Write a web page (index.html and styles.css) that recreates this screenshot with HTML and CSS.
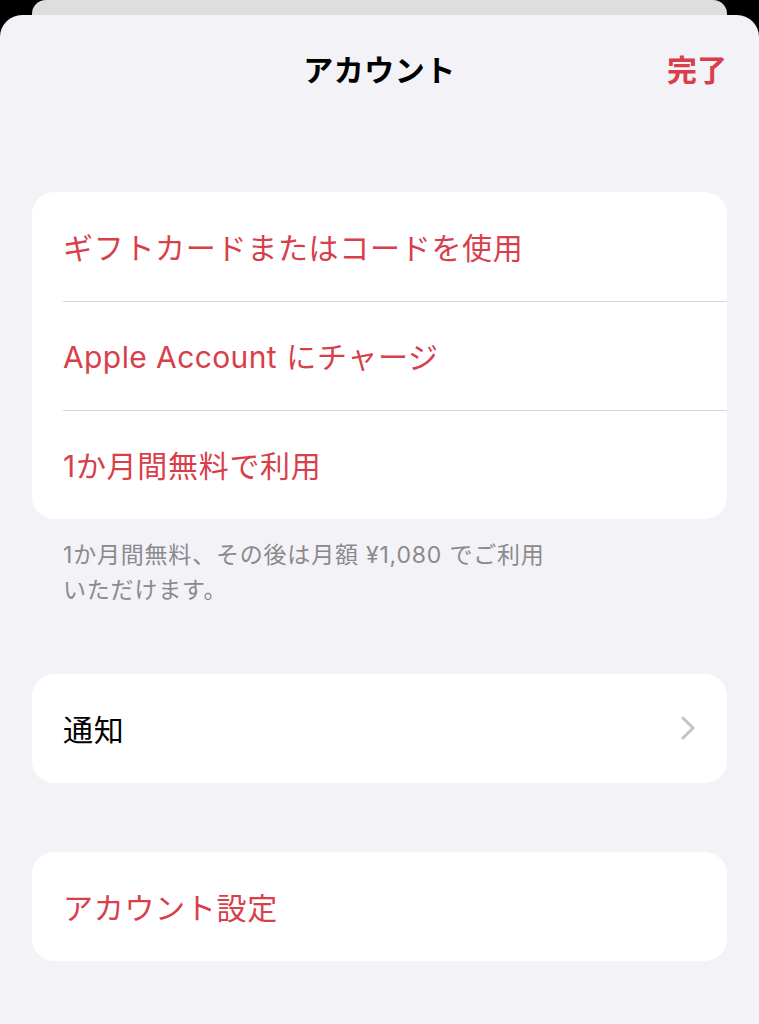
FILE: index.html
```html
<!DOCTYPE html>
<html lang="ja">
<head>
  <meta charset="UTF-8">
  <title>アカウント</title>
  <link rel="stylesheet" href="styles.css">
</head>
<body>
  <div class="back-card"></div>

  <div class="sheet">
    <header class="nav">
      <span></span>
      <h1 class="nav-title">アカウント</h1>
      <span class="nav-done">完了</span>
    </header>

    <section class="group">
      <div class="row tint">ギフトカードまたはコードを使用</div>
      <div class="row tint"><span><span class="latin">Apple Account</span> にチャージ</span></div>
      <div class="row tint">1か月間無料で利用</div>
    </section>
    <p class="group-footer">1か月間無料、その後は月額 ¥1,080 でご利用<br>いただけます。</p>

    <section class="group spaced">
      <div class="row">
        <span>通知</span>
        <svg class="chevron" width="14" height="24" viewBox="0 0 14 24">
          <polyline points="2,2 12,12 2,22" fill="none" stroke="#c4c4c8" stroke-width="3" stroke-linecap="round" stroke-linejoin="round"/>
        </svg>
      </div>
    </section>

    <section class="group spaced-lg">
      <div class="row tint">アカウント設定</div>
    </section>
  </div>
</body>
</html>
```

FILE: styles.css
```css
body {
  margin: 0;
  background: #000;
  font-family: Inter, "Noto Sans CJK JP", sans-serif;
}

.back-card {
  height: 15px;
  margin: 0 32px;
  background: #dededf;
  border-radius: 14px 14px 0 0;
}

.sheet {
  background: #f2f2f7;
  border-radius: 22px 22px 0 0;
  min-height: 1009px;
  padding-top: 31px;
}

.nav {
  display: grid;
  grid-template-columns: 1fr auto 1fr;
  align-items: center;
  height: 42px;
  padding: 0 32px;
}

.nav-title {
  margin: 0;
  font-size: 30px;
  font-weight: 700;
  color: #000;
  letter-spacing: 0.5px;
}

.nav-done {
  justify-self: end;
  font-size: 30px;
  font-weight: 700;
  color: #d83f4b;
}

.group {
  margin: 104px 32px 0;
  background: #fff;
  border-radius: 22px;
  overflow: hidden;
}

.group.spaced {
  margin-top: 66px;
}

.group.spaced-lg {
  margin-top: 69px;
}

.row {
  display: flex;
  align-items: center;
  justify-content: space-between;
  height: 109px;
  padding-bottom: 2px;
  margin-left: 31px;
  padding-right: 32px;
  font-size: 30px;
  letter-spacing: 0.7px;
  color: #000;
  box-sizing: border-box;
}

.row + .row {
  border-top: 1px solid #d8d8dc;
}

.latin {
  letter-spacing: 0.4px;
}

.tint {
  color: #d83f4b;
}

.chevron {
  display: block;
}

.group-footer {
  margin: 19px 32px 0 63px;
  font-size: 23px;
  line-height: 35px;
  color: #8a8a8e;
  letter-spacing: 0.8px;
}
```
